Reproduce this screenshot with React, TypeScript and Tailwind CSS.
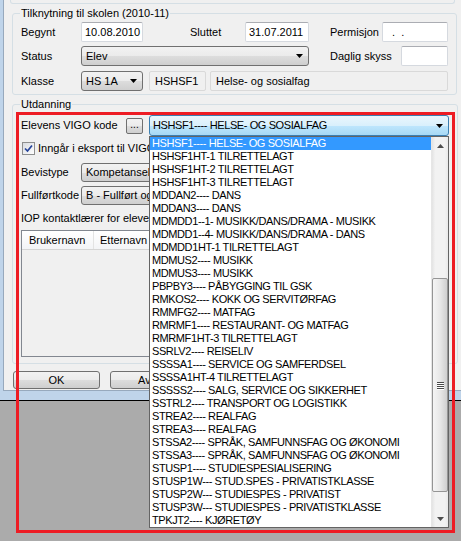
const vigoCodes = [
  'HSHSF1---- HELSE- OG SOSIALFAG',
  'HSHSF1HT-1 TILRETTELAGT',
  'HSHSF1HT-2 TILRETTELAGT',
  'HSHSF1HT-3 TILRETTELAGT',
  'MDDAN2---- DANS',
  'MDDAN3---- DANS',
  'MDMDD1--1- MUSIKK/DANS/DRAMA - MUSIKK',
  'MDMDD1--4- MUSIKK/DANS/DRAMA - DANS',
  'MDMDD1HT-1 TILRETTELAGT',
  'MDMUS2---- MUSIKK',
  'MDMUS3---- MUSIKK',
  'PBPBY3---- PÅBYGGING TIL GSK',
  'RMKOS2---- KOKK OG SERVITØRFAG',
  'RMMFG2---- MATFAG',
  'RMRMF1---- RESTAURANT- OG MATFAG',
  'RMRMF1HT-3 TILRETTELAGT',
  'SSRLV2---- REISELIV',
  'SSSSA1---- SERVICE OG SAMFERDSEL',
  'SSSSA1HT-4 TILRETTELAGT',
  'SSSSS2---- SALG, SERVICE OG SIKKERHET',
  'SSTRL2---- TRANSPORT OG LOGISTIKK',
  'STREA2---- REALFAG',
  'STREA3---- REALFAG',
  'STSSA2---- SPRÅK, SAMFUNNSFAG OG ØKONOMI',
  'STSSA3---- SPRÅK, SAMFUNNSFAG OG ØKONOMI',
  'STUSP1---- STUDIESPESIALISERING',
  'STUSP1W--- STUD.SPES - PRIVATISTKLASSE',
  'STUSP2W--- STUDIESPES - PRIVATIST',
  'STUSP3W--- STUDIESPES - PRIVATISTKLASSE',
  'TPKJT2---- KJØRETØY',
];

function Arrow({ up = false, color = '#000' }: { up?: boolean; color?: string }) {
  return (
    <svg width="7" height="4" viewBox="0 0 7 4" className="shrink-0">
      <path d={up ? 'M0 4h7L3.5 0z' : 'M0 0h7L3.5 4z'} fill={color} />
    </svg>
  );
}

function TextBox({ w, value = '' }: { w: string; value?: string }) {
  return (
    <div
      className={`${w} flex h-full items-center rounded-[2px] border border-[#d5d9df] border-t-[#abadb3] bg-white pl-[3px] whitespace-pre`}
    >
      {value}
    </div>
  );
}

function ReadBox({ w, value }: { w: string; value: string }) {
  return (
    <div
      className={`${w} flex h-full items-center rounded-[2px] border border-[#d9d9d9] bg-[#f0f0f0] pl-[5px]`}
    >
      {value}
    </div>
  );
}

function Combo({ w, value }: { w: string; value: string }) {
  return (
    <div
      className={`${w} flex h-full items-center justify-between overflow-hidden rounded-[3px] border border-[#707070] bg-[linear-gradient(#f2f2f2_0%,#ebebeb_50%,#dddddd_51%,#cfcfcf_100%)] pr-[5px] pl-[4px] whitespace-nowrap`}
    >
      <span>{value}</span>
      <Arrow />
    </div>
  );
}

function WinButton({ label, ml }: { label: string; ml: string }) {
  return (
    <div
      className={`${ml} flex h-[18px] w-[87px] items-center justify-center rounded-[3px] border border-[#707070] bg-[linear-gradient(#f2f2f2_0%,#ebebeb_50%,#dddddd_51%,#cfcfcf_100%)]`}
    >
      {label}
    </div>
  );
}

function Label({ w, children }: { w: string; children: React.ReactNode }) {
  return <div className={`${w} shrink-0 whitespace-nowrap`}>{children}</div>;
}

export default function App() {
  return (
    <div className="relative h-[541px] w-[461px] overflow-hidden bg-[#ababab] font-['Liberation_Sans',Arial,sans-serif] text-[11px] leading-[13px] text-black">
      {/* window */}
      <div className="flex h-[401px] flex-col border-b border-black bg-[#bfd4ea] pb-[9px] pl-[3px]">
        <div className="flex flex-1 flex-col border-b border-l border-[#97a9bd] bg-[#f0f0f0]">
          <div className="mr-[6px] ml-[6px] h-[4px] rounded-b-[3px] border-x border-b border-[#d5dfe5]" />

          {/* Tilknytning til skolen */}
          <fieldset className="mt-[3px] mr-[6px] ml-[8px] rounded-[3px] border border-[#d5dfe5] px-[8px] pb-[3px]">
            <legend className="-ml-[1px] px-[1px]">Tilknytning til skolen (2010-11)</legend>
            <div className="mt-[2px] flex h-[20px] items-center">
              <Label w="w-[60px]">Begynt</Label>
              <TextBox w="w-[62px]" value="10.08.2010" />
              <div className="ml-[47px] w-[55px] shrink-0">Sluttet</div>
              <TextBox w="w-[64px]" value="31.07.2011" />
              <div className="ml-[21px] w-[52px] shrink-0">Permisjon</div>
              <TextBox w="w-[66px]" value="  .  ." />
            </div>
            <div className="mt-[4px] flex h-[20px] items-center">
              <Label w="w-[60px]">Status</Label>
              <Combo w="w-[228px]" value="Elev" />
              <div className="ml-[21px] w-[71px] shrink-0">Daglig skyss</div>
              <TextBox w="w-[47px]" />
            </div>
            <div className="mt-[5px] flex h-[20px] items-center">
              <Label w="w-[60px]">Klasse</Label>
              <Combo w="w-[62px]" value="HS 1A" />
              <div className="ml-[6px] h-full">
                <ReadBox w="w-[57px]" value="HSHSF1" />
              </div>
              <div className="ml-[4px] h-full">
                <ReadBox w="w-[238px]" value="Helse- og sosialfag" />
              </div>
            </div>
          </fieldset>

          {/* Utdanning */}
          <fieldset className="mt-[3px] mr-[6px] ml-[8px] rounded-[3px] border border-[#d5dfe5] px-[8px] pb-[6px]">
            <legend className="-ml-[1px] px-[1px]">Utdanning</legend>
            <div className="mt-[4px] flex h-[21px] items-center">
              <Label w="w-[105px]">Elevens VIGO kode</Label>
              <div className="flex h-[16px] w-[17px] items-center justify-center rounded-[2px] border border-[#707070] bg-[linear-gradient(#f2f2f2_0%,#ebebeb_50%,#dddddd_51%,#cfcfcf_100%)] pb-[3px] text-[10px]">
                ...
              </div>
              <div className="ml-[6px] flex h-full w-[300px] items-center justify-between rounded-[3px] border border-[#3c7fb1] bg-[linear-gradient(#eaf6fd_0%,#d9f0fc_50%,#bee6fd_51%,#a7d9f5_100%)] pr-[5px] pl-[3px] tracking-[-0.4px] whitespace-nowrap">
                <span>HSHSF1---- HELSE- OG SOSIALFAG</span>
                <Arrow />
              </div>
            </div>
            <div className="mt-[4px] flex h-[17px] items-center">
              <div className="relative ml-[1px] h-[13px] w-[13px] border border-[#8e8f8f] bg-[linear-gradient(135deg,#d8dbe0,#ffffff)]">
                <svg width="11" height="11" viewBox="0 0 11 11" className="absolute top-0 left-0">
                  <path d="M2 5.5 L4.5 8 L9 2.5" fill="none" stroke="#26449a" strokeWidth="1.7" />
                </svg>
              </div>
              <div className="ml-[3px] whitespace-nowrap">Inngår i eksport til VIGO</div>
            </div>
            <div className="mt-[6px] flex h-[19px] items-center">
              <Label w="w-[60px]">Bevistype</Label>
              <Combo w="w-[228px]" value="Kompetansebevis" />
            </div>
            <div className="mt-[4px] flex h-[19px] items-center">
              <Label w="w-[60px]">Fullførtkode</Label>
              <Combo w="w-[228px]" value="B - Fullført og bestått" />
            </div>
            <div className="mt-[7px] h-[13px] whitespace-nowrap">IOP kontaktlærer for eleven</div>
            <div className="mt-[5px] flex h-[127px] w-[427px] flex-col border border-[#828790] bg-[#f0f0f0]">
              <div className="flex h-[19px] border-b border-[#d5d5d5] bg-[linear-gradient(#ffffff,#f3f4f6)]">
                <div className="flex w-[72px] items-center border-r border-[#e3e3e3] pl-[7px]">Brukernavn</div>
                <div className="flex w-[72px] items-center border-r border-[#e3e3e3] pl-[6px]">Etternavn</div>
                <div className="flex-1" />
              </div>
            </div>
          </fieldset>

          <div className="mt-[7px] flex">
            <WinButton ml="ml-[9px]" label="OK" />
            <WinButton ml="ml-[10px]" label="Avbryt" />
          </div>
        </div>
      </div>

      {/* open dropdown list */}
      <div className="absolute top-[136px] left-[149px] flex h-[392px] w-[300px] border border-[#646464] bg-white">
        <div className="flex w-[281px] flex-col tracking-[-0.4px] whitespace-nowrap">
          {vigoCodes.map((code, i) => (
            <div
              key={code + i}
              className={`h-[13px] overflow-hidden pl-[2px] leading-[13px] ${i === 0 ? 'bg-[#3399ff] text-white' : ''}`}
            >
              {code}
            </div>
          ))}
        </div>
        <div className="flex w-[17px] flex-col border-l border-[#e6e6e6] bg-[linear-gradient(90deg,#e3e3e3,#f2f2f2_20%,#f2f2f2_80%,#e9e9e9)]">
          <div className="flex h-[17px] items-center justify-center">
            <Arrow up color="#4d4d4d" />
          </div>
          <div className="flex flex-1 flex-col">
            <div className="mt-[124px] flex h-[214px] flex-col items-center justify-center rounded-[2px] border border-[#959595] bg-[linear-gradient(90deg,#f5f5f5,#e8e8e8_50%,#cfcfcf)]">
              <div className="flex flex-col gap-[1px]">
                {[0, 1, 2, 3].map((g) => (
                  <div key={g} className="h-[1px] w-[7px] bg-[#4a4a4a] shadow-[0_1px_0_#ffffff]" />
                ))}
              </div>
            </div>
          </div>
          <div className="flex h-[17px] items-center justify-center">
            <Arrow color="#4d4d4d" />
          </div>
        </div>
      </div>

      {/* red annotation frame */}
      <div className="pointer-events-none absolute top-[112px] left-[16px] h-[421px] w-[439px] border-[3px] border-[#ed1c24]" />
    </div>
  );
}
